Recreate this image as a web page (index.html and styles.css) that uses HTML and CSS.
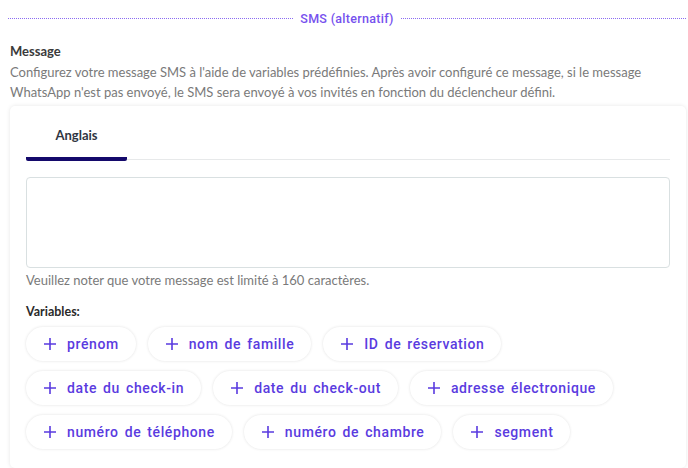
FILE: index.html
```html
<!DOCTYPE html>
<html lang="fr">
<head>
<meta charset="utf-8">
<link rel="stylesheet" href="styles.css">
</head>
<body>
<div class="page">
  <div class="divider"><span class="line"></span><span class="divider-text">SMS (alternatif)</span><span class="line"></span></div>
  <div class="label">Message</div>
  <p class="desc">Configurez votre message SMS à l'aide de variables prédéfinies. Après avoir configuré ce message, si le message WhatsApp n'est pas envoyé, le SMS sera envoyé à vos invités en fonction du déclencheur défini.</p>
  <div class="card">
    <div class="tabs">
      <div class="tab active">Anglais</div>
    </div>
    <div class="textarea"></div>
    <div class="note">Veuillez noter que votre message est limité à 160 caractères.</div>
    <div class="vars-label">Variables:</div>
    <div class="chips">
      <div class="row">
        <span class="chip"><svg class="plus" viewBox="0 0 12 12"><path d="M6 0v12M0 6h12"/></svg>prénom</span>
        <span class="chip"><svg class="plus" viewBox="0 0 12 12"><path d="M6 0v12M0 6h12"/></svg>nom de famille</span>
        <span class="chip"><svg class="plus" viewBox="0 0 12 12"><path d="M6 0v12M0 6h12"/></svg>ID de réservation</span>
      </div>
      <div class="row">
        <span class="chip"><svg class="plus" viewBox="0 0 12 12"><path d="M6 0v12M0 6h12"/></svg>date du check-in</span>
        <span class="chip"><svg class="plus" viewBox="0 0 12 12"><path d="M6 0v12M0 6h12"/></svg>date du check-out</span>
        <span class="chip"><svg class="plus" viewBox="0 0 12 12"><path d="M6 0v12M0 6h12"/></svg>adresse électronique</span>
      </div>
      <div class="row">
        <span class="chip"><svg class="plus" viewBox="0 0 12 12"><path d="M6 0v12M0 6h12"/></svg>numéro de téléphone</span>
        <span class="chip"><svg class="plus" viewBox="0 0 12 12"><path d="M6 0v12M0 6h12"/></svg>numéro de chambre</span>
        <span class="chip"><svg class="plus" viewBox="0 0 12 12"><path d="M6 0v12M0 6h12"/></svg>segment</span>
      </div>
    </div>
  </div>
</div>
</body>
</html>
```

FILE: styles.css
```css
* { box-sizing: border-box; }
html, body { margin: 0; padding: 0; background: #fff; }
body { font-family: Lato, "Noto Sans", sans-serif; }
.page { padding: 9px 2px 0 10px; }
.divider { display: flex; align-items: center; gap: 7px; margin-left: -2px; height: 18px; }
.divider .line { flex: 1; border-top: 1px dotted #8b6cf2; height: 0; }
.divider-text { color: #7651ee; font-family: Roboto, sans-serif; font-size: 12.5px; font-weight: 500; letter-spacing: 0.3px; }
.label { margin-top: 15px; font-size: 13px; font-weight: 700; color: #3a3a3a; line-height: 18px; }
.desc { margin: 2px 0 0; font-size: 13px; color: #7a7a7a; line-height: 20px; }
.card { margin-top: 4px; background: #fff; border-radius: 5px; box-shadow: 0 0 4px rgba(0,0,0,0.1); padding: 14px 16px 16px 16px; height: 362px; }
.tabs { border-bottom: 1px solid #e7e9ea; height: 40px; display: flex; }
.tab { width: 101px; text-align: center; font-size: 13px; font-weight: 700; color: #2f3542; padding-top: 7px; }
.tab.active { border-bottom: 4px solid #14096b; border-radius: 2px; margin-bottom: -2px; }
.textarea { margin-top: 17px; height: 91px; border: 1px solid #d9e0e1; border-radius: 4px; }
.note { margin-top: 3px; font-size: 13px; color: #7a7a7a; line-height: 18px; }
.vars-label { margin-top: 15px; font-size: 12.5px; font-weight: 700; color: #2a2a2a; line-height: 16px; }
.chips { margin-top: 7px; display: flex; flex-direction: column; gap: 10px; }
.row { display: flex; gap: 12px; }
.chip { display: inline-flex; align-items: center; height: 34px; padding: 0 17px 0 18px; border-radius: 17px; background: #fff; box-shadow: 0 0 3px rgba(0,0,0,0.12); color: #5a3be0; font-family: Roboto, sans-serif; font-weight: 500; font-size: 14px; letter-spacing: 0.6px; word-spacing: 2px; }
.plus { width: 12px; height: 12px; margin-right: 11px; stroke: #5a3be0; stroke-width: 1.6; fill: none; }
```
